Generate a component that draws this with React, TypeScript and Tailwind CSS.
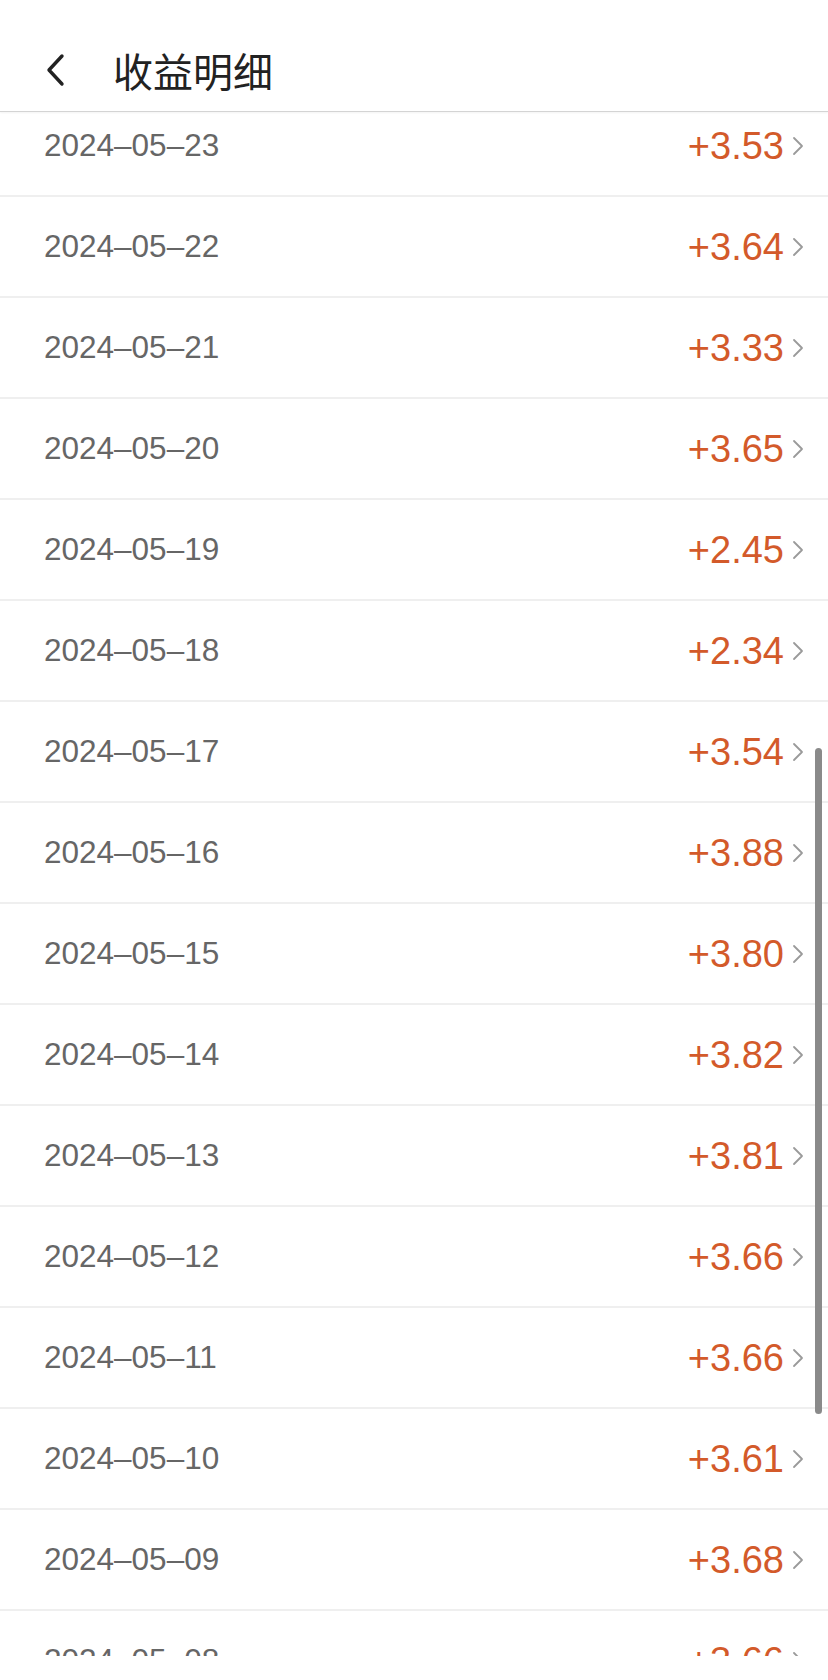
import React from "react";

const rows: { date: string; amount: string }[] = [
  { date: "2024-05-23", amount: "+3.53" },
  { date: "2024-05-22", amount: "+3.64" },
  { date: "2024-05-21", amount: "+3.33" },
  { date: "2024-05-20", amount: "+3.65" },
  { date: "2024-05-19", amount: "+2.45" },
  { date: "2024-05-18", amount: "+2.34" },
  { date: "2024-05-17", amount: "+3.54" },
  { date: "2024-05-16", amount: "+3.88" },
  { date: "2024-05-15", amount: "+3.80" },
  { date: "2024-05-14", amount: "+3.82" },
  { date: "2024-05-13", amount: "+3.81" },
  { date: "2024-05-12", amount: "+3.66" },
  { date: "2024-05-11", amount: "+3.66" },
  { date: "2024-05-10", amount: "+3.61" },
  { date: "2024-05-09", amount: "+3.68" },
  { date: "2024-05-08", amount: "+3.66" },
];

function BackIcon() {
  return (
    <svg width="22" height="34" viewBox="0 0 22 34" fill="none">
      <polyline
        points="18,3 5,17 18,31"
        stroke="#222222"
        strokeWidth="3.4"
        strokeLinecap="round"
        strokeLinejoin="round"
      />
    </svg>
  );
}

function Chevron() {
  return (
    <svg width="12" height="20" viewBox="0 0 12 20" fill="none">
      <polyline
        points="2,2 10,10 2,18"
        stroke="#9a9a9a"
        strokeWidth="1.8"
        strokeLinecap="round"
        strokeLinejoin="round"
      />
    </svg>
  );
}

export default function App() {
  return (
    <div
      className="relative w-[828px] h-[1680px] overflow-hidden bg-white"
      style={{ fontFamily: '"Liberation Sans", Arial, "Noto Sans CJK SC", sans-serif' }}
    >
      <header className="relative z-10 h-[112px] pt-[28px] bg-white border-b border-[#d4d4d4] shadow-[0_1px_2px_rgba(0,0,0,0.05)]">
        <div className="h-full flex items-center">
          <div className="pl-[44px] w-[113px]">
            <BackIcon />
          </div>
          <h1
            className="text-[40px] leading-none font-normal text-[#222222]"
            style={{ fontFamily: '"Noto Sans CJK SC", "Noto Sans", sans-serif' }}
          >
            收益明细
          </h1>
        </div>
      </header>

      <div className="h-[1544px] overflow-hidden">
        <div className="-mt-[16px]">
          {rows.map((r) => (
            <div
              key={r.date}
              className="h-[101px] flex items-center justify-between pl-[44px] pr-[24px] border-b-2 border-[#efefef]"
            >
              <span className="text-[31.5px] leading-none text-[#666666]">
                {r.date.replace(/-/g, "–")}
              </span>
              <div className="flex items-center gap-[8px]">
                <span className="text-[38px] leading-none text-[#d35a2a]">{r.amount}</span>
                <Chevron />
              </div>
            </div>
          ))}
        </div>
      </div>

      <div className="absolute right-[6px] top-[748px] h-[666px] w-[7px] rounded-full bg-[#8a8a8a]" />
    </div>
  );
}
